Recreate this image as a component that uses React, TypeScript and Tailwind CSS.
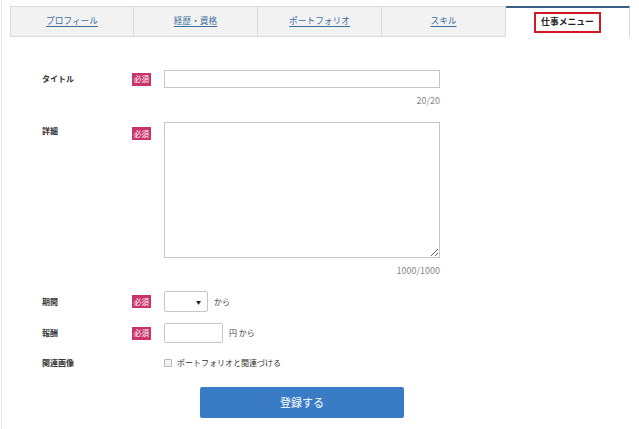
import React from "react";

const jp = { fontFamily: '"Noto Sans CJK JP", "Noto Sans", sans-serif' };

function Badge() {
  return (
    <span className="flex h-[13px] w-[19px] items-center justify-center bg-[#c9356b] text-[7.5px] leading-none text-white">
      必須
    </span>
  );
}

export default function App() {
  const tabs = ["プロフィール", "経歴・資格", "ポートフォリオ", "スキル"];
  return (
    <div
      style={jp}
      className="ml-px min-h-[429px] border-l border-[#e8e8e8] bg-white text-[#333]"
    >
      <div className="ml-[8px] pt-[6px]">
        <div className="flex w-[620px]">
          {tabs.map((t, i) => (
            <div
              key={t}
              className={
                "flex h-[31px] w-[124px] items-center justify-center border-y border-r border-[#dadada] bg-[#f2f2f2] " +
                (i === 0 ? "border-l" : "")
              }
            >
              <span className="text-[8.7px] leading-none text-[#3c6f9e] underline underline-offset-2">
                {t}
              </span>
            </div>
          ))}
          <div className="flex h-[31px] w-[124px] items-center justify-center border-r border-t-2 border-[#dadada] border-t-[#3a5f86] bg-white">
            <span className="flex h-[21px] w-[67px] items-center justify-center border-2 border-[#d11a25] text-[8.8px] font-bold leading-none text-[#222]">
              仕事メニュー
            </span>
          </div>
        </div>
      </div>

      <div className="pl-[40px]">
        {/* Title */}
        <div className="mt-[33px] flex h-[18px] items-center">
          <div className="w-[90px] text-[8px] font-bold leading-[12px]">タイトル</div>
          <div className="flex w-[32px] items-center">
            <Badge />
          </div>
          <input className="h-[18px] w-[276px] border border-[#c6c6c6] bg-white outline-none" />
        </div>
        <div className="ml-[122px] mt-[7px] h-[12px] w-[276px] text-right text-[9px] leading-[12px] text-[#888]">
          20/20
        </div>

        {/* Detail */}
        <div className="mt-[15px] flex items-start">
          <div className="w-[90px] pt-[3px] text-[8px] font-bold leading-[12px]">詳細</div>
          <div className="flex w-[32px] pt-[5px]">
            <Badge />
          </div>
          <textarea className="block h-[136px] w-[276px] border border-[#c6c6c6] bg-white outline-none" />
        </div>
        <div className="ml-[122px] mt-[7px] h-[12px] w-[276px] text-right text-[9px] leading-[12px] text-[#888]">
          1000/1000
        </div>

        {/* Period */}
        <div className="mt-[14px] flex h-[21px] items-center">
          <div className="w-[90px] text-[8px] font-bold leading-[12px]">期間</div>
          <div className="flex w-[32px] items-center">
            <Badge />
          </div>
          <div className="relative h-[21px] w-[44px] rounded-[2px] border border-[#c6c6c6] bg-white">
            <span className="absolute right-[6px] top-[7px] text-[5px] leading-none text-[#222]">▼</span>
          </div>
          <span className="ml-[6px] text-[8px] leading-[12px] text-[#444]">から</span>
        </div>

        {/* Reward */}
        <div className="mt-[11px] flex h-[20px] items-center">
          <div className="w-[90px] text-[8px] font-bold leading-[12px]">報酬</div>
          <div className="flex w-[32px] items-center">
            <Badge />
          </div>
          <input className="h-[20px] w-[59px] rounded-[2px] border border-[#c6c6c6] bg-white outline-none" />
          <span className="ml-[6px] text-[8px] leading-[12px] text-[#444]">円 から</span>
        </div>

        {/* Related image */}
        <div className="mt-[14px] flex h-[12px] items-center">
          <div className="w-[122px] text-[8px] font-bold leading-[12px]">関連画像</div>
          <span className="h-[8px] w-[8px] rounded-[1px] border border-[#b5b5b5] bg-[#f4f4f4]" />
          <span className="ml-[5px] text-[8px] leading-[12px] text-[#333]">ポートフォリオと関連づける</span>
        </div>

        {/* Submit */}
        <div className="ml-[158px] mt-[18px]">
          <button className="flex h-[31px] w-[204px] items-center justify-center rounded-[2px] bg-[#3a7bc6] text-[11px] text-white">
            登録する
          </button>
        </div>
      </div>
    </div>
  );
}
